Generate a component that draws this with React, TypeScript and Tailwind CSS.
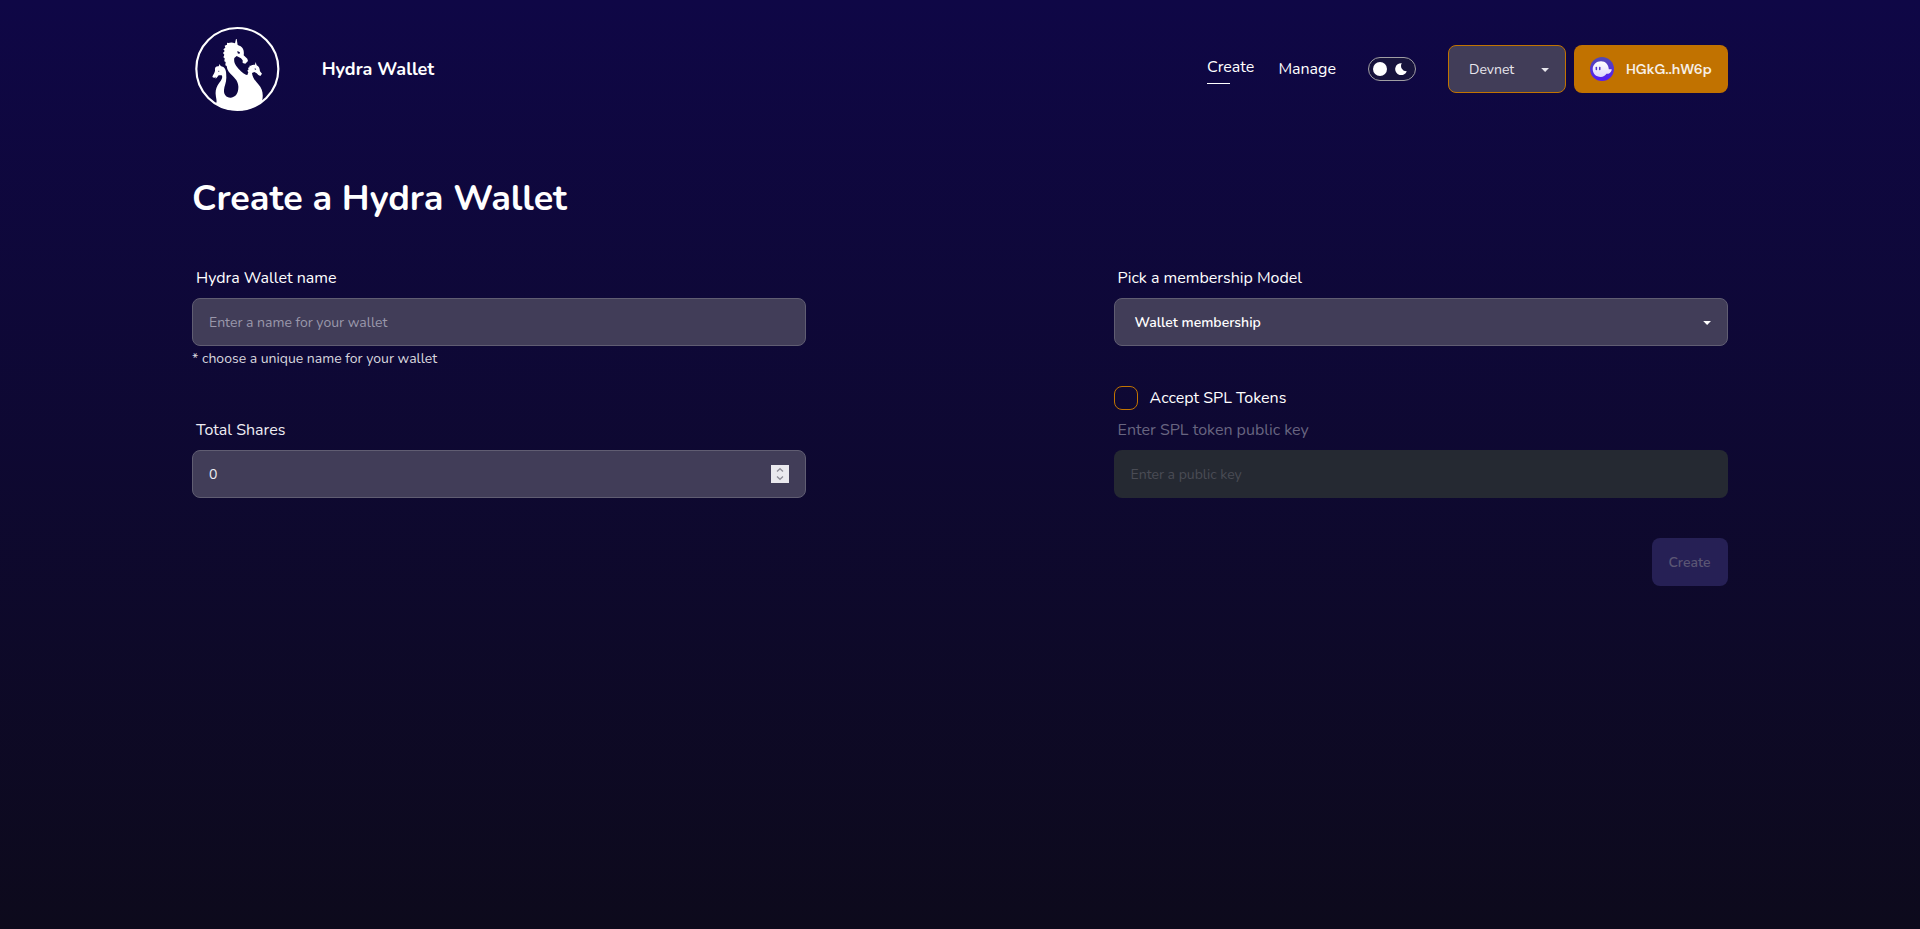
import React from "react";

function HydraLogo() {
  return (
    <svg viewBox="42 33 260 258" className="h-[86px] w-[86.67px]" fill="none">
      <circle cx="172" cy="162" r="123" stroke="#fff" strokeWidth="6.5" />
      <path
        fill="#fff"
        d="M168 72 L165 85 C157 81 150 82 146 84 L141 83 L141 89 L134 92 L136 98 L130 103 L134 108 L129 114 L133 119 L130 127 L134 130 L133 139 L137 141 L136 151 L140 153 C141 166 149 174 156 181 C166 191 174 199 175 214 C176 232 168 247 153 248 C138 249 131 238 132 225 C133 212 139 203 139 188 C139 171 138 162 130 156 L122 153 L119 147 L116 154 C108 153 104 158 105 165 C106 172 99 178 97 186 L103 189 L106 185 L107 191 L112 186 L116 181 L125 181 C129 186 125 194 119 202 C109 216 106 225 107 238 C108 252 112 259 108 265 C125 281 148 287 172 286 C199 286 223 279 246 259 C251 240 248 221 235 208 C226 198 217 187 216 174 L223 171 L230 175 L235 180 L241 183 L246 176 L240 169 C239 161 237 154 230 151 L227 141 L225 149 C219 149 215 150 213 152 L208 152 L209 156 L204 159 L206 163 L202 167 L205 172 L202 180 C191 178 181 167 173 158 C164 148 161 139 163 129 L170 123 L183 130 L188 136 L188 144 L196 146 L204 138 L202 131 L191 121 C193 108 190 99 182 94 L173 90 L170 72 Z"
      />
      <path fill="#100845" d="M172 108 L180 112 L178 117 L173 115 Z M115 167 L119 168 L115 171 Z M224 160 L229 162 L225 165 Z" />
    </svg>
  );
}

function Caret() {
  return (
    <svg width="8" height="4" viewBox="0 0 8 4" className="relative top-[0.5px] shrink-0">
      <path d="M0.2 0H8L4.1 4Z" fill="currentColor" />
    </svg>
  );
}

function Ghost() {
  return (
    <svg width="24" height="24" viewBox="0 0 24 24" className="shrink-0">
      <defs>
        <linearGradient id="disc" x1="0" y1="0" x2="0" y2="1">
          <stop offset="0" stopColor="#534bb1" />
          <stop offset="1" stopColor="#551bf9" />
        </linearGradient>
        <linearGradient id="body" x1="0" y1="0" x2="0" y2="1">
          <stop offset="0" stopColor="#fff" />
          <stop offset="1" stopColor="#ded6fb" />
        </linearGradient>
      </defs>
      <circle cx="12" cy="12" r="12" fill="url(#disc)" />
      <path
        fill="url(#body)"
        d="M2.700 12C2.800 7.700 6.300 4.200 11 4.200c4.600 0 7.500 3.500 7.800 8h2.400c.5 0 .6.4.5.8-.8 3-3.400 4.200-5.200 3.800-1.300 2-3.200 3.200-5.700 3.200-4.800 0-8.200-3.600-8.100-8z"
      />
      <rect x="5.600" y="9.800" width="1.500" height="3.400" rx=".7" fill="#4d34c8" />
      <rect x="9" y="9.800" width="1.500" height="3.400" rx=".7" fill="#4d34c8" />
    </svg>
  );
}

const field = "flex h-12 w-full items-center rounded-lg border border-[#605d72] bg-[#413d58] text-sm";

export default function App() {
  return (
    <div className="min-h-screen bg-linear-to-b/srgb from-[#0f0746] to-[#0d0a1c] font-['Nunito','Lato',sans-serif] text-white">
      <div className="mx-auto w-[1536px]">
        <header className="flex h-[138px] items-center">
          <div className="ml-[2px]">
            <HydraLogo />
          </div>
          <div className="ml-[41px] text-lg font-bold">Hydra Wallet</div>
          <nav className="ml-auto flex items-center text-base">
            <a className="relative -mt-1">
              Create
              <span className="absolute top-[28px] left-0 h-px w-[23px] bg-white" />
            </a>
            <a className="ml-6">Manage</a>
          </nav>
          <div className="ml-8 flex h-6 w-12 items-center justify-between rounded-full border border-[#a09ea3] bg-[#17133c] pr-2 pl-1">
            <span className="size-[14px] rounded-full bg-white" />
            <svg width="12" height="12" viewBox="0 0 12 12">
              <path d="M6.800.2A6 6 0 1 0 11.800 8.300 5.400 5.400 0 0 1 6.800.2Z" fill="#fff" />
            </svg>
          </div>
          <button className="ml-8 flex h-12 w-[118px] items-center justify-between rounded-lg border border-[#c27400] bg-[#413d58] pr-4 pl-5 text-sm text-[#e7e6ec]">
            <span className="pt-px">Devnet</span>
            <Caret />
          </button>
          <button className="ml-2 flex h-12 w-[154px] items-center rounded-lg bg-[#c17200] px-4">
            <Ghost />
            <span className="ml-3 font-['DM_Sans','Inter',sans-serif] text-sm font-semibold whitespace-nowrap text-[#f6efe6]">HGkG..hW6p</span>
          </button>
        </header>

        <main>
          <h1 className="mt-[39px] text-4xl leading-[44px] font-bold">Create a Hydra Wallet</h1>
          <div className="mt-[41px] grid grid-cols-[614px_614px] justify-between">
            <section>
              <label className="block h-9 pt-1 pl-1 text-base">Hydra Wallet name</label>
              <div className={field + " px-4"}>
                <span className="pt-px text-[#9a98ab]">Enter a name for your wallet</span>
              </div>
              <p className="mt-[3px] h-[65px] text-sm text-[#d8d7df]">* choose a unique name for your wallet</p>
              <label className="block h-9 pt-1 pl-1 text-base text-[#eeedf3]">Total Shares</label>
              <div className={field + " justify-between px-4"}>
                <span className="pt-px text-[#eeedf3]">0</span>
                <svg width="18" height="18" viewBox="0 0 18 18">
                  <path fill="#eae9ee" d="M0 0h18v18H0z" />
                  <path d="M6 6.500 9 3.700l3 2.800M6 11.500l3 2.800 3-2.800" fill="none" stroke="#8e8d97" strokeWidth="1.300" />
                </svg>
              </div>
            </section>
            <section>
              <label className="block h-9 pt-1 pl-[3.600px] text-base">Pick a membership Model</label>
              <div className={field + " justify-between pr-4 pl-[19.600px]"}>
                <span className="pt-px font-semibold">Wallet membership</span>
                <Caret />
              </div>
              <div className="mt-10 flex h-6 items-center">
                <span className="size-6 rounded-lg border border-[#c27400]" />
                <span className="ml-[11.600px] text-base">Accept SPL Tokens</span>
              </div>
              <label className="mt-1 block h-9 pt-1 pl-[3.600px] text-base text-[#686580]">Enter SPL token public key</label>
              <div className="flex h-12 items-center rounded-lg bg-[#252932] px-[16.600px] text-sm text-[#4a4c55]">
                <span className="pt-px">Enter a public key</span>
              </div>
              <button className="mt-10 ml-auto flex h-12 w-19 items-center justify-center rounded-lg bg-[#262055] pt-px pr-px text-sm font-semibold text-[#5b5674]">Create</button>
            </section>
          </div>
        </main>
      </div>
    </div>
  );
}
